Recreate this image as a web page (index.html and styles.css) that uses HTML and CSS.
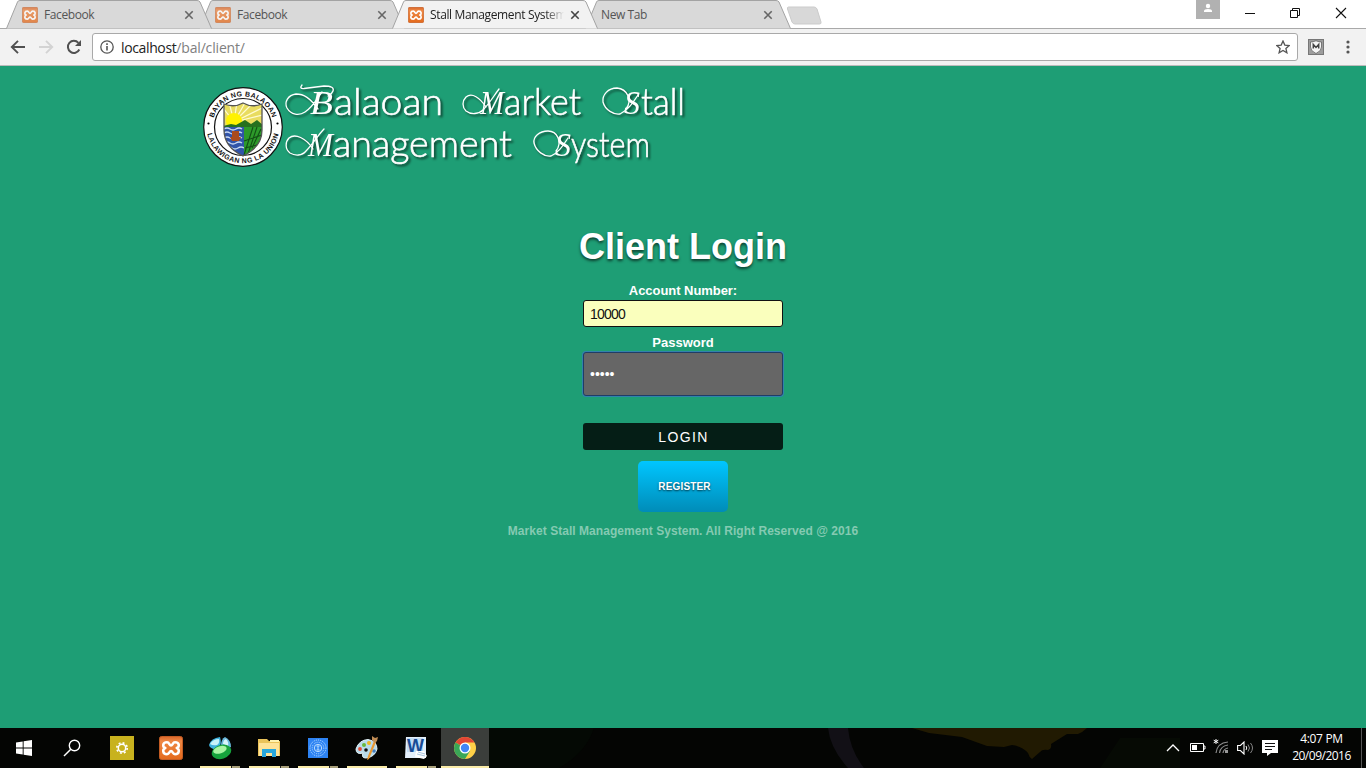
FILE: index.html
```html
<!DOCTYPE html>
<html lang="en">
<head>
<meta charset="utf-8">
<title>Stall Management System</title>
<link rel="stylesheet" href="styles.css">
</head>
<body>
<svg class="defs" width="0" height="0" aria-hidden="true">
  <defs>
    <linearGradient id="orange" x1="0" y1="0" x2="0" y2="1"><stop offset="0" stop-color="#d9662a"/><stop offset=".2" stop-color="#ee8844"/><stop offset="1" stop-color="#e46a1c"/></linearGradient>
    <symbol id="xampp" viewBox="0 0 24 24">
      <rect x=".5" y=".5" width="23" height="23" rx="2" fill="url(#orange)" stroke="#c25c23"/>
      <path d="M8 6.300c-4.700 0-4.700 4.700-1.700 5.700-3 1-3 6.200 1.700 6.200 2.500 0 2.200-3.200 4-3.200s1.500 3.200 4 3.200c4.700 0 4.700-5.200 1.700-6.200 3-1 3-5.700-1.700-5.700-2.500 0-2.200 3.200-4 3.200s-1.500-3.200-4-3.200z" fill="none" stroke="#fff" stroke-width="2.500" stroke-linejoin="round"/>
    </symbol>
    <symbol id="close" viewBox="0 0 10 10"><path d="M1.300 1.300l7.400 7.400M8.700 1.300l-7.400 7.400" stroke="currentColor" stroke-width="1.600"/></symbol>
    <symbol id="tab" viewBox="0 0 206 29"><path d="M.5 28.500L11.500 2Q12 .5 14 .5H191Q193 .5 194 2L205.500 28.500" fill="currentColor" stroke="#a3a3a3"/></symbol>
  </defs>
</svg>

<header class="tabstrip">
  <div class="tab tab-first">
    <svg class="tab-shape"><use href="#tab"/></svg>
    <svg class="favicon faded"><use href="#xampp"/></svg><span class="tab-title">Facebook</span><svg class="tab-close"><use href="#close"/></svg>
  </div>
  <div class="tab tab-second">
    <svg class="tab-shape"><use href="#tab"/></svg>
    <svg class="favicon faded"><use href="#xampp"/></svg><span class="tab-title">Facebook</span><svg class="tab-close"><use href="#close"/></svg>
  </div>
  <div class="tab tab-active">
    <svg class="tab-shape"><use href="#tab"/></svg>
    <svg class="favicon"><use href="#xampp"/></svg><span class="tab-title">Stall Management System</span><svg class="tab-close"><use href="#close"/></svg>
  </div>
  <div class="tab tab-last">
    <svg class="tab-shape"><use href="#tab"/></svg>
    <span class="tab-title">New Tab</span><svg class="tab-close"><use href="#close"/></svg>
  </div>
  <svg class="new-tab" viewBox="0 0 36 19"><path d="M2.500 1H28q2 0 3 2l4 13q.5 2-1.500 2H9q-2 0-3-2L1.500 3Q1 1 2.500 1z" fill="#d8d8d8" stroke="#cbcbcb"/></svg>
  <div class="window-controls">
    <svg class="profile" viewBox="0 0 24 19"><rect width="24" height="19" fill="#b1b1b1"/><circle cx="12" cy="6" r="2.200" fill="#fff"/><path d="M8 12V11q0-2 4-2t4 2v1z" fill="#fff"/></svg>
    <svg class="winbtn" viewBox="0 0 12 12"><path d="M1 6.500h10" stroke="#111"/></svg>
    <svg class="winbtn" viewBox="0 0 12 12"><path d="M1.500 3.500h7v7h-7zM3.500 3.500v-2h7v7h-2" fill="none" stroke="#111"/></svg>
    <svg class="winbtn" viewBox="0 0 12 12"><path d="M1 1l10 10M11 1L1 11" stroke="#111" stroke-width="1.100"/></svg>
  </div>
</header>

<nav class="toolbar">
  <svg class="nav-icon" viewBox="0 0 16 16"><path d="M15 8H2M8 1.800L1.800 8 8 14.200" fill="none" stroke="#505050" stroke-width="1.900"/></svg>
  <svg class="nav-icon" viewBox="0 0 16 16"><path d="M1 8h13M8 1.800L14.200 8 8 14.200" fill="none" stroke="#d3d3d3" stroke-width="1.900"/></svg>
  <svg class="nav-icon" viewBox="0 0 16 16"><path d="M13.300 10.500A6 6 0 1 1 12.400 3.900" fill="none" stroke="#505050" stroke-width="2"/><path d="M15 1v6H9z" fill="#505050"/></svg>
  <div class="omnibox">
    <svg class="info" viewBox="0 0 14 14"><circle cx="7" cy="7" r="6.200" fill="none" stroke="#555" stroke-width="1.300"/><path d="M7 6v4.500M7 3.300v1.600" stroke="#555" stroke-width="1.600"/></svg>
    <span class="url">localhost<span class="path">/bal/client/</span></span>
    <svg class="star" viewBox="0 0 14 14"><path d="M7 1l1.800 4.100 4.400.4-3.300 2.900 1 4.400L7 10.500l-3.900 2.300 1-4.400L.8 5.500l4.400-.4z" fill="none" stroke="#555" stroke-width="1.300"/></svg>
  </div>
  <svg class="shield" viewBox="0 0 16 16"><rect x=".5" y=".5" width="15" height="15" fill="#9d9d9d" stroke="#777"/><path d="M2.500 3Q5 3 8 1.800 11 3 13.500 3v5q0 4-5.500 6.500Q2.500 12 2.500 8z" fill="#f5f5f5" stroke="#555" stroke-width=".7"/><path d="M5.300 9.500V5.500L8 8.500l2.700-3v4" fill="none" stroke="#444" stroke-width="1.500"/></svg>
  <svg class="menu" viewBox="0 0 4 14"><g fill="#555"><circle cx="2" cy="2" r="1.600"/><circle cx="2" cy="7" r="1.600"/><circle cx="2" cy="12" r="1.600"/></g></svg>
</nav>

<main class="page">
  <svg class="banner" viewBox="203 80 490 90">
    <defs>
      <path id="arc-top" d="M212.200 127a30.800 30.800 0 0 1 61.600 0"/>
      <path id="arc-bottom" d="M206.800 127a36.200 36.200 0 0 0 72.400 0"/>
      <clipPath id="crest"><path d="M224 104q10 4 19-1 9 5 19 1v26q0 17-19 26-19-9-19-26z"/></clipPath>
    </defs>
    <circle cx="243" cy="127" r="39.300" fill="#fff" stroke="#111" stroke-width="1.200"/>
    <circle cx="243" cy="127" r="28.500" fill="#fff" stroke="#111" stroke-width="1.200"/>
    <g clip-path="url(#crest)">
      <rect x="223" y="101" width="40" height="56" fill="#e9dc60"/>
      <path d="M234 122L223 108M234 122l-5-20M234 122l3-20M234 122l11-19M234 122l19-19M234 122l28-14M234 122l29-7" stroke="#fffbd0" stroke-width="1.200"/>
      <circle cx="234" cy="121" r="8" fill="#fff200"/>
      <path d="M223 126l8-2 5 1 9-5 6 4 6-4 6 5v8h-41z" fill="#26701f"/>
      <path d="M223 127h21v31h-21z" fill="#3153a8"/>
      <path d="M224 129q3-2 6 0t6 0 6 0M224 133q3-2 6 0t6 0 6 0M224 138q3-2 6 0t6 0 6 0M224 143q3-2 6 0t6 0 6 0M226 148q3-2 6 0t6 0 6 0" fill="none" stroke="#c9daf5" stroke-width="1.300"/>
      <path d="M230 137h11l-2 4h-7zM232 131h7v6h-7z" fill="#aa4a1c"/>
      <path d="M244 127h19v31h-19z" fill="#2d9a2a"/>
      <path d="M244 155l9-28M248 154l9-27M244 141l18-6M252 148l9-19M245 148l16-4" stroke="#124f15" stroke-width="1.100"/>
    </g>
    <path d="M224 104q10 4 19-1 9 5 19 1v26q0 17-19 26-19-9-19-26z" fill="none" stroke="#555" stroke-width="1.300"/>
    <text class="seal-text"><textPath href="#arc-top" startOffset="50%" text-anchor="middle">BAYAN NG BALAOAN</textPath></text>
    <text class="seal-text seal-bottom"><textPath href="#arc-bottom" startOffset="50%" text-anchor="middle">LALAWIGAN NG LA UNION</textPath></text>
    <circle cx="208.500" cy="123.500" r="1.100"/><circle cx="277.500" cy="123.500" r="1.100"/>
    <g class="wordmark">
      <text><tspan class="swash" x="310" y="114" textLength="23" lengthAdjust="spacingAndGlyphs">B</tspan><tspan x="334" y="115" textLength="109" lengthAdjust="spacingAndGlyphs">alaoan</tspan></text>
      <text><tspan class="swash" x="480" y="114" textLength="24" lengthAdjust="spacingAndGlyphs">M</tspan><tspan x="504" y="115" textLength="77" lengthAdjust="spacingAndGlyphs">arket</tspan></text>
      <text><tspan class="swash" x="624" y="114" textLength="16" lengthAdjust="spacingAndGlyphs">S</tspan><tspan x="641" y="115" textLength="44" lengthAdjust="spacingAndGlyphs">tall</tspan></text>
      <text><tspan class="swash" x="308" y="156" textLength="25" lengthAdjust="spacingAndGlyphs">M</tspan><tspan x="333" y="157" textLength="179" lengthAdjust="spacingAndGlyphs">anagement</tspan></text>
      <text><tspan class="swash" x="555" y="156" textLength="16" lengthAdjust="spacingAndGlyphs">S</tspan><tspan class="small" x="571" y="157" textLength="79" lengthAdjust="spacingAndGlyphs">ystem</tspan></text>
      <g class="flourish">
        <path d="M302 85q-3 4 2 3.500l20-2.500q11 0 9 5-1 3-5 5M318 109c-8-11-14-15-22-15-8 1-12 8-9 14 4 7 12 8 18 4 8-5 11-12 17-20"/>
        <path d="M486 107c-6-9-14-15-20-10-4 4-4 10 0 14 5 4 13 3 17-1 6-6 10-13 16-21"/>
        <path d="M626 109c7-9 1-20-9-21-9 0-15 7-14 14 2 8 11 13 17 12 8-4 12-10 18-19"/>
        <path d="M313 149c-7-11-18-16-24-11-4 4-4 11 1 15 5 3 12 3 16-2 7-7 12-16 18-22"/>
        <path d="M556 151c7-9 1-20-8-20-9 0-15 6-14 12 2 8 10 14 17 13 8-4 11-9 17-18"/>
      </g>
    </g>
  </svg>

  <form class="login" onsubmit="return false">
    <h1>Client Login</h1>
    <label class="account-label" for="account">Account Number:</label>
    <input id="account" class="field account" type="text" value="10000">
    <label for="password">Password</label>
    <input id="password" class="field password" type="password" value="admin">
    <button class="submit" type="submit">LOGIN</button>
    <button class="register" type="button">REGISTER</button>
    <p class="copyright">Market Stall Management System. All Right Reserved @ 2016</p>
  </form>
</main>

<footer class="taskbar">
  <svg class="wallpaper" viewBox="0 0 1366 40" preserveAspectRatio="none"><rect width="1366" height="40" fill="#040503"/><path d="M489 0h105q-8 25-35 40h-70z" fill="#040904"/><path d="M828 0h20q2 22 16 40h-16q-18-20-20-40z" fill="#121016"/><path d="M912 0h175q-4 4-9 6h-11l-16 10q1 5-3 6-6-1-8 2l-8 7q-3-2-4-6-6-7-16-8l-8 2-17-1-25-9-33-4z" fill="#211a02"/><path d="M1120 10h60v30h-80z" fill="#060a04"/></svg>
  <div class="task flush"><svg width="16" height="16" viewBox="0 0 16 16"><path d="M0 2.400l6.700-1v6.200H0zM7.600 1.200L16 0v7.600H7.600zM0 8.400h6.700v6.200L0 13.600zM7.600 8.400H16V16l-8.400-1.200z" fill="#fff"/></svg></div>
  <div class="task search"><svg width="18" height="18" viewBox="0 0 18 18"><circle cx="11.500" cy="6.500" r="5.200" fill="none" stroke="#fff" stroke-width="1.400"/><path d="M7.800 10.300L1 17" stroke="#fff" stroke-width="1.500"/></svg></div>
  <div class="task"><svg width="24" height="24" viewBox="0 0 24 24"><path d="M0 0h24v24H0z" fill="#c8b21e"/><circle cx="12" cy="12" r="3.700" fill="none" stroke="#fff" stroke-width="1.500"/><circle cx="12" cy="12" r="5.200" fill="none" stroke="#fff" stroke-width="1.700" stroke-dasharray="1.900 2.184"/></svg></div>
  <div class="task"><svg width="24" height="24"><use href="#xampp"/></svg></div>
  <div class="task running stacked"><svg width="26" height="26" viewBox="0 0 26 26"><path d="M2 10Q4 3 13 2q2 6-1 12-9 1-10-4z" fill="#3eb2dd"/><path d="M3 9q3-5 9-5 1 4-2 6-4 1-7-1z" fill="#c6f2fa"/><path d="M14 11Q14 4 18 2q6 3 6 10l-6 3z" fill="#69b9dc"/><path d="M16 9q0-4 3-5 3 3 2 7z" fill="#d8f4fc"/><ellipse cx="14.500" cy="17" rx="10" ry="7" transform="rotate(-18 14 17)" fill="#16a33c"/><ellipse cx="13" cy="14.800" rx="7" ry="3.500" transform="rotate(-18 13 15)" fill="#a8f5a3"/></svg></div>
  <div class="task running stacked"><svg width="22" height="20" viewBox="0 0 22 20"><path d="M0 1h9l2 2h11v15H0z" fill="#eac35a"/><path d="M1 5h20v13H1z" fill="#ffe397"/><path d="M12 2h9v2h-9z" fill="#fff3b0"/><path d="M4 11h14v8h-4v-4H8v4H4z" fill="#28a7dc"/></svg></div>
  <div class="task running stacked"><svg width="20" height="20" viewBox="0 0 20 20"><path d="M0 0h20v20H0z" fill="#2d83f3"/><g fill="none" stroke="#b9dcff"><circle cx="10" cy="10" r="8" stroke-dasharray="1.200 1"/><circle cx="10" cy="10" r="5.800" stroke-dasharray="1 1"/><circle cx="10" cy="10" r="3.700"/><path d="M8.500 8h3M10 8v4M8.500 12h3"/></g></svg></div>
  <div class="task running"><svg width="26" height="26" viewBox="0 0 26 26"><path d="M2 14Q5 5 14 4.500q9 1.500 9 9.500-2 8-11 9-5 0-3-5-7 2-7-4z" fill="#b9dbea" stroke="#e6f5fa"/><circle cx="6" cy="14" r="1.900" fill="#e55038"/><circle cx="10" cy="10" r="2" fill="#68b83b"/><circle cx="15" cy="8" r="2" fill="#f2b621"/><circle cx="12" cy="15" r="1.800" fill="#111"/><circle cx="20" cy="16" r="1.800" fill="#467dbd"/><path d="M20 6l2 1-7 17-2 1 1-4z" fill="#e99831"/><path d="M18 1l3 2 3-1-1 4-2 2-3-3z" fill="#c18d55"/></svg></div>
  <div class="task running stacked"><svg width="24" height="24" viewBox="0 0 24 24"><path d="M2 1h20v21H1z" fill="#e4effa"/><path d="M3 2h16v14H3z" fill="#c2dcf3"/><text x="3" y="16" class="word-mark">W</text><path d="M12 15h8l3 5-3 3-9-2z" fill="#fff"/><path d="M13 18l8 2M14 16l7 2" stroke="#aac6e1"/></svg></div>
  <div class="task running active"><svg width="24" height="24" viewBox="0 0 24 24"><circle cx="12" cy="12" r="11" fill="#ffd047"/><path d="M12 12L2.500 6.500A11 11 0 0 1 21.500 6.500H12z" fill="#e14635"/><path d="M12 12L2.500 6.500A11 11 0 0 0 12 23l5-8z" fill="#3aa757"/><circle cx="12" cy="12" r="5.500" fill="#fff"/><circle cx="12" cy="12" r="4.200" fill="#4285f4"/></svg></div>
  <div class="tray">
    <svg width="14" height="8" viewBox="0 0 14 8"><path d="M1 7l6-6 6 6" fill="none" stroke="#fff" stroke-width="1.300"/></svg>
    <svg class="battery" width="16" height="10" viewBox="0 0 16 10"><path d="M.5.500h13v8H.5zM14 3h1v3h-1" fill="none" stroke="#fff"/><path d="M2 2h5v5H2z" fill="#fff"/></svg>
    <svg class="wifi" width="16" height="16" viewBox="0 0 16 16"><path d="M3 1v5M.7 2.200l4.600 2.600M5.300 2.200L.7 4.800" stroke="#fff"/><g fill="none" stroke="#8d8d8d" stroke-width="1.200"><path d="M3 15Q4 5 15 4M6.500 15q1-7 8.500-8M10 15q.5-4 5-5"/></g><path d="M12 12h3v3h-3z" fill="#999"/></svg>
    <svg class="volume" width="17" height="14" viewBox="0 0 17 14"><path d="M.6 4.500h2.800L7 1v12L3.400 9.500H.6z" fill="none" stroke="#fff" stroke-width="1.100"/><path d="M9 5q1.500 2 0 4" fill="none" stroke="#fff"/><path d="M11 3.500q3 3.500 0 7M13.500 2q4 5 0 10" fill="none" stroke="#888"/></svg>
    <svg class="notes" width="16" height="16" viewBox="0 0 16 16"><path d="M0 0h16v13H9l-4 3v-3H0z" fill="#fff"/><path d="M3 3.500h10M3 6.500h10M3 9.500h7" stroke="#111"/></svg>
    <div class="clock"><span class="time">4:07 PM</span><span class="date">20/09/2016</span></div>
  </div>
</footer>
</body>
</html>
```
FILE: styles.css
```css
* { box-sizing: border-box; }
body { margin: 0; width: 1366px; height: 768px; overflow: hidden; display: flex; flex-direction: column; background: #1e9e75; font-family: "Liberation Sans", Arial, sans-serif; }
svg { display: block; flex: none; }
.defs { position: absolute; }

.tabstrip { height: 29px; flex: none; display: flex; padding-left: 6px; background: #fff; border-bottom: 1px solid #a9a9a9; }
.tab { position: relative; width: 206px; height: 29px; flex: none; margin-right: -13px; padding: 0 18px 0 16px; display: flex; align-items: center; gap: 6px; color: #d9d9d9; font: 12px/16px "Open Sans", "Noto Sans", sans-serif; }
.tab-shape { position: absolute; left: 0; top: 0; width: 206px; height: 29px; z-index: -1; }
.tab-first { z-index: 3; }
.tab-second { z-index: 2; }
.tab-active { z-index: 5; color: #f2f2f2; }
.tab-last { z-index: 1; }
.favicon { width: 16px; height: 16px; margin-top: 1px; }
.faded { opacity: .75; }
.tab-title { flex: 1; min-width: 0; color: #555; letter-spacing: -.4px; white-space: nowrap; }
.tab-active .tab-title { color: #222; letter-spacing: -.36px; -webkit-mask-image: linear-gradient(90deg, #000 115px, transparent 134px); mask-image: linear-gradient(90deg, #000 115px, transparent 134px); }
.tab-close { width: 10px; height: 10px; margin-top: 1px; color: #666; }
.tab-active .tab-close { color: #444; }
.new-tab { width: 36px; height: 19px; margin: 6px 0 0 8px; }
.window-controls { margin-left: auto; display: flex; align-items: flex-start; padding-right: 19px; }
.winbtn { width: 12px; height: 12px; margin: 7px 0 0 33px; }
.profile { width: 24px; height: 19px; }
.profile + .winbtn { margin-left: 24px; }
.winbtn:last-child { margin-left: 34px; }

.toolbar { height: 37px; flex: none; display: flex; align-items: center; padding: 0 16px 0 10px; background: #f2f2f2; border-bottom: 1px solid #bcbcbc; }
.nav-icon { width: 16px; height: 16px; margin-right: 12px; }
.nav-icon:nth-child(3) { margin-right: 10px; }
.omnibox { width: 1206px; height: 28px; display: flex; align-items: center; padding: 0 7px; background: #fff; border: 1px solid #a9a9a9; border-radius: 3px; }
.info { width: 14px; height: 14px; }
.url { margin-left: 7px; flex: 1; font: 14px "Open Sans", "Noto Sans", sans-serif; letter-spacing: -.37px; color: #222; }
.path { color: #808080; letter-spacing: -.17px; }
.star { width: 14px; height: 14px; }
.shield { width: 16px; height: 16px; margin-left: 10px; }
.menu { width: 4px; height: 14px; margin-left: auto; }

.page { flex: 1; background: #1e9e75; padding: 14px 0 0; }
.banner { width: 490px; height: 90px; margin-left: 203px; overflow: visible; }
.seal-text { font: bold 7px "Liberation Sans", Arial, sans-serif; fill: #111; letter-spacing: .35px; }
.seal-bottom { letter-spacing: .45px; }
.wordmark { filter: drop-shadow(2px 2px 1px rgba(0, 0, 0, .55)); fill: #fff; stroke: #fff; stroke-width: .6px; font: 300 38px Lato, "Liberation Sans", sans-serif; }
.wordmark .swash { font: italic 34px "Liberation Serif", serif; stroke: none; }
.wordmark .small { font-size: 36px; }
.wordmark .flourish { fill: none; stroke: #fff; stroke-width: 1.300px; stroke-linecap: round; }

.login { display: flex; flex-direction: column; align-items: center; padding-top: 56px; color: #fff; }
.login h1 { margin: 0 0 15px; font-size: 36px; line-height: 42px; text-shadow: 0 2px 3px rgba(0, 0, 0, .6); }
.login label { font-size: 13px; font-weight: bold; line-height: 15px; margin-bottom: 2px; }
.login .account-label { letter-spacing: -.05px; }
.field { display: block; width: 200px; border: 1px solid #111; border-radius: 3px; font-family: "Liberation Sans", Arial, sans-serif; outline: 0; padding: 0 6px; }
.account { height: 27px; margin-bottom: 8px; background: #faffbd; color: #111; font-size: 14px; letter-spacing: -.8px; padding-top: 1px; }
.password { height: 44px; margin-bottom: 27px; background: #666; color: #fff; border-color: #1f3d66; box-shadow: 0 0 0 1px #3182ad; font-size: 14px; }
.submit { width: 200px; height: 27px; margin-bottom: 11px; padding: 1px 0 0 1px; border: 0; border-radius: 3px; background: #051e16; color: #fff; font: 14px "Liberation Sans", Arial, sans-serif; letter-spacing: 1.400px; }
.register { width: 90px; height: 51px; border: 0; border-radius: 5px; background: linear-gradient(#00c6ff, #008cb8); color: #fff; font: bold 10px "Liberation Sans", Arial, sans-serif; letter-spacing: .15px; padding: 0 0 0 3px; text-shadow: 0 1px 2px rgba(0, 0, 0, .7); }
.copyright { margin: 12px 0 0; font-size: 12px; font-weight: bold; line-height: 14px; letter-spacing: .04px; color: #85cab2; }

.taskbar { position: relative; z-index: 0; height: 40px; flex: none; display: flex; background: #050604; }
.wallpaper { position: absolute; inset: 0; width: 1366px; height: 40px; z-index: -1; }
.task { width: 48px; height: 40px; margin-right: 1px; display: flex; align-items: center; justify-content: center; position: relative; }
.task.flush { margin-right: 0; }
.task.search { margin-right: 2px; }
.running::after { content: ""; position: absolute; left: 4px; bottom: 0; width: 40px; height: 2px; background: #faeca8; }
.stacked::after { background: linear-gradient(90deg, #faeca8 31px, #222 31px, #222 32px, #aaa17b 32px); }
.active { background: #3b3e3b; }
.active::after { left: 0; width: 48px; }
.word-mark { font: bold 18px "Liberation Sans", sans-serif; fill: #174b96; }
.tray { margin-left: auto; display: flex; align-items: center; height: 40px; padding-right: 4px; }
.battery { margin-left: 10px; }
.wifi { margin-left: 7px; margin-top: -4px; }
.volume { margin-left: 8px; }
.notes { margin-left: 8px; }
.clock { width: 80px; height: 40px; margin-left: 4px; padding: 2px 0 0; border-right: 1px solid #555; display: flex; flex-direction: column; align-items: center; color: #fff; font: 12px/17px "Open Sans", "Noto Sans", sans-serif; }
.time { letter-spacing: -.35px; }
.date { letter-spacing: -.5px; }
```
